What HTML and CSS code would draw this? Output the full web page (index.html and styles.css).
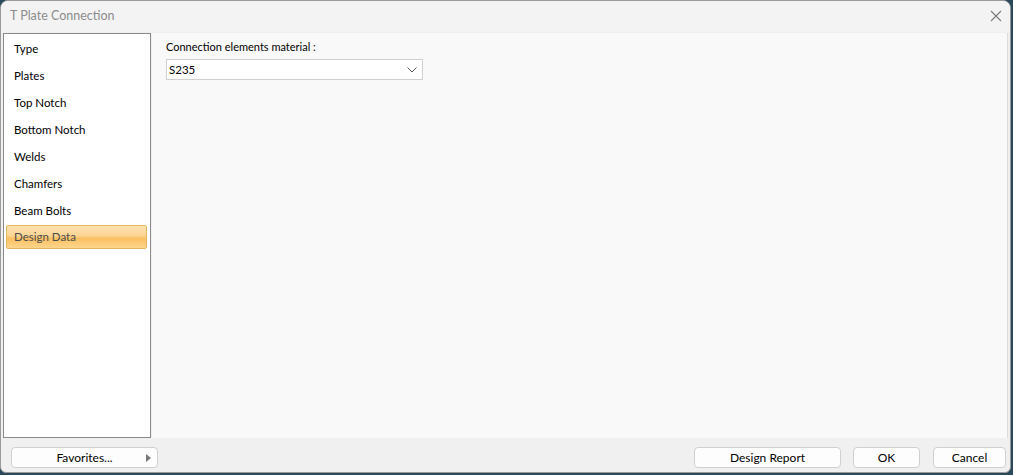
FILE: index.html
```html
<!DOCTYPE html>
<html>
<head>
<meta charset="utf-8">
<link rel="stylesheet" href="styles.css">
</head>
<body>
<div class="window">
  <div class="titlebar">
    <span class="title">T Plate Connection</span>
    <svg class="close" width="12" height="12" viewBox="0 0 12 12"><path d="M1 1L11 11M11 1L1 11" stroke="#7a7a7a" stroke-width="1.1" fill="none"/></svg>
  </div>
  <div class="main">
    <ul class="nav">
      <li>Type</li>
      <li>Plates</li>
      <li>Top Notch</li>
      <li>Bottom Notch</li>
      <li>Welds</li>
      <li>Chamfers</li>
      <li>Beam Bolts</li>
      <li class="sel">Design Data</li>
    </ul>
    <div class="content">
      <div class="label">Connection elements material :</div>
      <div class="select">
        <span>S235</span>
        <svg width="10" height="6" viewBox="0 0 10 6"><path d="M0.5 0.5L5 5L9.5 0.5" stroke="#555" stroke-width="1" fill="none"/></svg>
      </div>
    </div>
  </div>
  <div class="footer">
    <button class="btn fav">Favorites... <svg class="tri" width="5" height="8" viewBox="0 0 5 8"><path d="M0 0L5 4L0 8Z" fill="#777"/></svg></button>
    <div class="spacer"></div>
    <button class="btn report">Design Report</button>
    <button class="btn ok">OK</button>
    <button class="btn cancel">Cancel</button>
  </div>
</div>
</body>
</html>
```
FILE: styles.css
```css
html, body {
  margin: 0;
  padding: 0;
}
body {
  width: 1013px;
  height: 475px;
  background: #2a4a5c;
  font-family: Lato, "Noto Sans", "Liberation Sans", sans-serif;
  font-size: 12px;
  color: #000;
  overflow: hidden;
}
.window {
  box-sizing: border-box;
  width: 1011px;
  height: 473px;
  background: #f0f0f0;
  border: 1px solid #9a9a9a;
  border-radius: 8px 8px 6px 6px;
  display: flex;
  flex-direction: column;
  overflow: hidden;
}
.titlebar {
  height: 31px;
  flex: none;
  display: flex;
  align-items: center;
  padding: 0 0 0 9px;
  background: #f3f3f3;
  position: relative;
}
.title {
  color: #8c8c8c;
  font-size: 12.5px;
  line-height: 14px;
  margin-top: -1px;
}
.close {
  position: absolute;
  right: 8px;
  top: 9px;
}
.main {
  flex: none;
  height: 406px;
  display: flex;
  padding: 1px 2px 0 2px;
  gap: 1px;
  box-sizing: border-box;
}
.nav {
  list-style: none;
  margin: 0;
  padding: 0 3px 0 2px;
  width: 141px;
  box-sizing: content-box;
  background: #fff;
  border: 1px solid #8a8a8a;
  height: 403px;
}
.nav li {
  height: 27px;
  line-height: 27px;
  padding-left: 7px;
  box-sizing: border-box;
  border: 1px solid transparent;
  border-radius: 2px;
  font-size: 11.5px;
}
.nav li.sel {
  height: 24px;
  line-height: 22px;
  margin-top: 2px;
  border-color: #e2b75e;
  background: linear-gradient(#fde1b0 0%, #fcd495 45%, #fbc061 55%, #fdd58d 100%);
  color: #4c4c4c;
}
.content {
  flex: 1;
  background: #f9f9f9;
  border-right: 1px solid #dcdcdc;
  padding: 7px 14px;
  box-sizing: border-box;
}
.label {
  font-size: 11px;
  line-height: 14px;
}
.select {
  margin-top: 5px;
  width: 257px;
  height: 21px;
  box-sizing: border-box;
  background: #fff;
  border: 1px solid #d0d0d0;
  display: flex;
  align-items: center;
  justify-content: space-between;
  padding: 0 5px 0 2px;
  font-size: 11.5px;
}
.footer {
  flex: 1;
  display: flex;
  align-items: center;
  padding: 5px 4px 0 10px;
  gap: 12px;
}
.spacer {
  flex: 1;
}
.btn {
  height: 21px;
  box-sizing: border-box;
  background: #fdfdfd;
  border: 1px solid #d0d0d0;
  border-radius: 4px;
  font-family: inherit;
  font-size: 12px;
  color: #000;
  padding: 0;
  position: relative;
}
.fav { width: 147px; }
.fav .tri {
  position: absolute;
  right: 6px;
  top: 6px;
}
.report { width: 147px; }
.ok { width: 67px; }
.cancel { width: 73px; margin-left: 1px; }
```
